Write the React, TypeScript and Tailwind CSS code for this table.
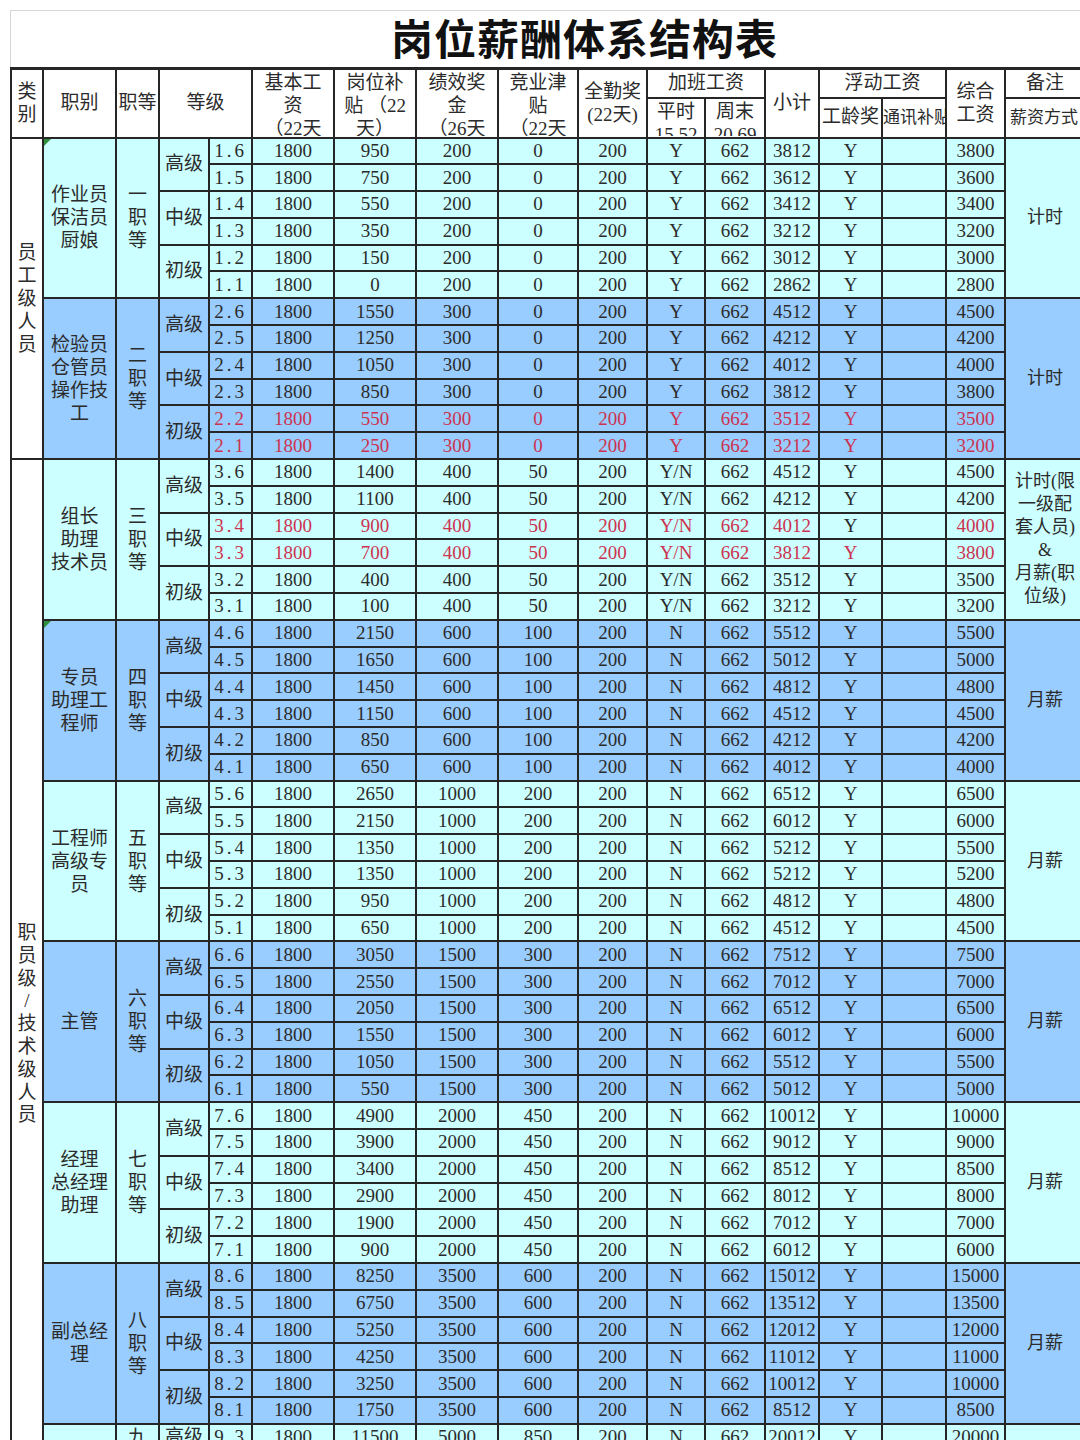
import React from "react"

type Row = [string, string, string, string, string?]

interface Group {
  tier: string
  titles: string[]
  blue: boolean
  pay: string[]
  perf: string
  comp: string
  ot: string
  rows: Row[]
}

const groups: Group[] = [
  {
    tier: "一", titles: ["作业员", "保洁员", "厨娘"], blue: false, pay: ["计时"], perf: "200", comp: "0", ot: "Y",
    rows: [["1.6", "950", "3812", "3800"], ["1.5", "750", "3612", "3600"], ["1.4", "550", "3412", "3400"], ["1.3", "350", "3212", "3200"], ["1.2", "150", "3012", "3000"], ["1.1", "0", "2862", "2800"]],
  },
  {
    tier: "二", titles: ["检验员", "仓管员", "操作技", "工"], blue: true, pay: ["计时"], perf: "300", comp: "0", ot: "Y",
    rows: [["2.6", "1550", "4512", "4500"], ["2.5", "1250", "4212", "4200"], ["2.4", "1050", "4012", "4000"], ["2.3", "850", "3812", "3800"], ["2.2", "550", "3512", "3500", "r"], ["2.1", "250", "3212", "3200", "r"]],
  },
  {
    tier: "三", titles: ["组长", "助理", "技术员"], blue: false, pay: ["计时(限", "一级配", "套人员)", "&", "月薪(职", "位级)"], perf: "400", comp: "50", ot: "Y/N",
    rows: [["3.6", "1400", "4512", "4500"], ["3.5", "1100", "4212", "4200"], ["3.4", "900", "4012", "4000", "p"], ["3.3", "700", "3812", "3800", "r"], ["3.2", "400", "3512", "3500"], ["3.1", "100", "3212", "3200"]],
  },
  {
    tier: "四", titles: ["专员", "助理工", "程师"], blue: true, pay: ["月薪"], perf: "600", comp: "100", ot: "N",
    rows: [["4.6", "2150", "5512", "5500"], ["4.5", "1650", "5012", "5000"], ["4.4", "1450", "4812", "4800"], ["4.3", "1150", "4512", "4500"], ["4.2", "850", "4212", "4200"], ["4.1", "650", "4012", "4000"]],
  },
  {
    tier: "五", titles: ["工程师", "高级专", "员"], blue: false, pay: ["月薪"], perf: "1000", comp: "200", ot: "N",
    rows: [["5.6", "2650", "6512", "6500"], ["5.5", "2150", "6012", "6000"], ["5.4", "1350", "5212", "5500"], ["5.3", "1350", "5212", "5200"], ["5.2", "950", "4812", "4800"], ["5.1", "650", "4512", "4500"]],
  },
  {
    tier: "六", titles: ["主管"], blue: true, pay: ["月薪"], perf: "1500", comp: "300", ot: "N",
    rows: [["6.6", "3050", "7512", "7500"], ["6.5", "2550", "7012", "7000"], ["6.4", "2050", "6512", "6500"], ["6.3", "1550", "6012", "6000"], ["6.2", "1050", "5512", "5500"], ["6.1", "550", "5012", "5000"]],
  },
  {
    tier: "七", titles: ["经理", "总经理", "助理"], blue: false, pay: ["月薪"], perf: "2000", comp: "450", ot: "N",
    rows: [["7.6", "4900", "10012", "10000"], ["7.5", "3900", "9012", "9000"], ["7.4", "3400", "8512", "8500"], ["7.3", "2900", "8012", "8000"], ["7.2", "1900", "7012", "7000"], ["7.1", "900", "6012", "6000"]],
  },
  {
    tier: "八", titles: ["副总经", "理"], blue: true, pay: ["月薪"], perf: "3500", comp: "600", ot: "N",
    rows: [["8.6", "8250", "15012", "15000"], ["8.5", "6750", "13512", "13500"], ["8.4", "5250", "12012", "12000"], ["8.3", "4250", "11012", "11000"], ["8.2", "3250", "10012", "10000"], ["8.1", "1750", "8512", "8500"]],
  },
  {
    tier: "九", titles: [], blue: false, pay: [], perf: "5000", comp: "850", ot: "N",
    rows: [["9.3", "11500", "20012", "20000"]],
  },
]

const widths = [32, 73, 43, 50, 43, 82, 82, 82, 80, 69, 58, 60, 54, 63, 64, 59, 80]

const cell = "border-2 border-[#262626] p-0 text-center align-middle"
const red = "text-[#cc3350]"

function Lines({ items }: { items: string[] }) {
  return (
    <div className="leading-[23px]">
      {items.map((t, i) => (
        <div key={i}>{t}</div>
      ))}
    </div>
  )
}

function Clip({ items, h }: { items: string[]; h: string }) {
  return (
    <div className={`${h} overflow-hidden pt-px leading-[23px]`}>
      {items.map((t, i) => (
        <div key={i} className="whitespace-nowrap">{t}</div>
      ))}
    </div>
  )
}

function Corner() {
  return <span className="absolute left-0 top-0 h-0 w-0 border-r-[7px] border-t-[7px] border-r-transparent border-t-[#2f8f3c]" />
}

export default function App() {
  const body: React.ReactNode[] = []
  const levels = ["高级", "中级", "初级"]

  groups.forEach((g, gi) => {
    const bg = g.blue ? "bg-[#99ccff]" : "bg-[#ccffff]"
    g.rows.forEach((r, ri) => {
      const [grade, post, sub, total, mode] = r
      const c = mode === "r" || mode === "p" ? red : ""
      const yc = mode === "r" ? red : ""
      body.push(
        <tr key={grade} className="h-[26.8px] leading-[24px]">
          {gi === 0 && ri === 0 && (
            <td rowSpan={12} className={`${cell} bg-white`}>
              <Lines items={"员工级人员".split("")} />
            </td>
          )}
          {gi === 2 && ri === 0 && (
            <td rowSpan={37} className={`${cell} bg-white !align-top`}>
              <div className="pt-[462px] leading-[22.8px]">
                {"职员级/技术级人员".split("").map((t, i) => (
                  <div key={i}>{t}</div>
                ))}
              </div>
            </td>
          )}
          {ri === 0 && (
            <td rowSpan={g.rows.length} className={`${cell} ${bg} relative`}>
              {(gi === 0 || gi === 3) && <Corner />}
              <Lines items={g.titles} />
            </td>
          )}
          {ri === 0 && (
            <td rowSpan={g.rows.length} className={`${cell} ${bg}`}>
              <Lines items={g.rows.length > 2 ? [g.tier, "职", "等"] : [g.tier]} />
            </td>
          )}
          {ri % 2 === 0 && (
            <td rowSpan={g.rows.length > 1 ? 2 : 1} className={`${cell} ${bg} text-[19px]`}>
              {levels[ri / 2]}
            </td>
          )}
          <td className={`${cell} ${bg} ${c} tracking-[3px]`}>{grade}</td>
          <td className={`${cell} ${bg} ${c}`}>1800</td>
          <td className={`${cell} ${bg} ${c}`}>{post}</td>
          <td className={`${cell} ${bg} ${c}`}>{g.perf}</td>
          <td className={`${cell} ${bg} ${c}`}>{g.comp}</td>
          <td className={`${cell} ${bg} ${c}`}>200</td>
          <td className={`${cell} ${bg} ${c}`}>{g.ot}</td>
          <td className={`${cell} ${bg} ${c}`}>662</td>
          <td className={`${cell} ${bg} ${c}`}>{sub}</td>
          <td className={`${cell} ${bg} ${yc}`}>Y</td>
          <td className={`${cell} ${bg}`}></td>
          <td className={`${cell} ${bg} ${c}`}>{total}</td>
          {ri === 0 && (
            <td rowSpan={g.rows.length} className={`${cell} ${bg} text-[18px]`}>
              <Lines items={g.pay} />
            </td>
          )}
        </tr>
      )
    })
  })

  return (
    <div className="h-[1440px] w-[1080px] overflow-hidden bg-white pl-[10px] pt-[10px] font-['Liberation_Serif','Noto_Sans_CJK_SC',serif] text-[19px] text-[#2b2b2b]">
      <div className="flex h-[57px] w-[1074px] items-center justify-center border-l border-t border-[#d6d6d6] pl-[74px] pt-[4px]">
        <span className="text-[42px] font-bold leading-none tracking-[1px] text-[#111]">岗位薪酬体系结构表</span>
      </div>
      <table className="w-[1074px] table-fixed border-collapse">
        <colgroup>
          {widths.map((w, i) => (
            <col key={i} style={{ width: w }} />
          ))}
        </colgroup>
        <thead>
          <tr className="h-[29px]">
            <td rowSpan={2} className={`${cell} border-t-[3px]`}>
              <Lines items={["类", "别"]} />
            </td>
            <td rowSpan={2} className={`${cell} border-t-[3px]`}>职别</td>
            <td rowSpan={2} className={`${cell} border-t-[3px] whitespace-nowrap`}>职等</td>
            <td rowSpan={2} colSpan={2} className={`${cell} border-t-[3px]`}>等级</td>
            <td rowSpan={2} className={`${cell} border-t-[3px] !align-top`}>
              <Clip items={["基本工", "资", "（22天"]} h="h-[66px]" />
            </td>
            <td rowSpan={2} className={`${cell} border-t-[3px] !align-top`}>
              <Clip items={["岗位补", "贴 （22", "天）"]} h="h-[66px]" />
            </td>
            <td rowSpan={2} className={`${cell} border-t-[3px] !align-top`}>
              <Clip items={["绩效奖", "金", "（26天"]} h="h-[66px]" />
            </td>
            <td rowSpan={2} className={`${cell} border-t-[3px] !align-top`}>
              <Clip items={["竞业津", "贴", "（22天"]} h="h-[66px]" />
            </td>
            <td rowSpan={2} className={`${cell} border-t-[3px]`}>
              <Lines items={["全勤奖", "(22天)"]} />
            </td>
            <td colSpan={2} className={`${cell} border-t-[3px] leading-[24px]`}>加班工资</td>
            <td rowSpan={2} className={`${cell} border-t-[3px]`}>小计</td>
            <td colSpan={2} className={`${cell} border-t-[3px] leading-[24px]`}>浮动工资</td>
            <td rowSpan={2} className={`${cell} border-t-[3px]`}>
              <Lines items={["综合", "工资"]} />
            </td>
            <td className={`${cell} border-t-[3px] leading-[24px]`}>备注</td>
          </tr>
          <tr className="h-[40px]">
            <td className={`${cell} !align-top`}>
              <Clip items={["平时", "15.52"]} h="h-[37px]" />
            </td>
            <td className={`${cell} !align-top`}>
              <Clip items={["周末", "20.69"]} h="h-[37px]" />
            </td>
            <td className={`${cell} whitespace-nowrap`}>工龄奖</td>
            <td className={`${cell} overflow-hidden whitespace-nowrap text-left text-[17px]`}>通讯补贴</td>
            <td className={`${cell} whitespace-nowrap pl-[4px] text-left text-[17px]`}>薪资方式</td>
          </tr>
        </thead>
        <tbody>{body}</tbody>
      </table>
    </div>
  )
}
